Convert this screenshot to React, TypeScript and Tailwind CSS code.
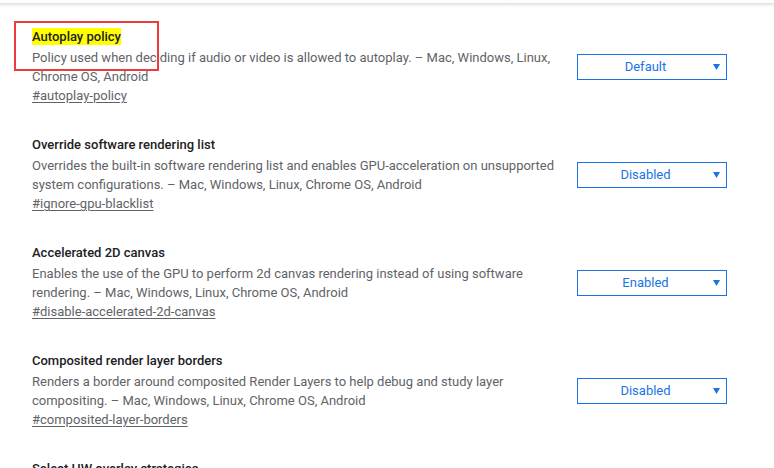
import React from "react";

const flags = [
  {
    name: "Autoplay policy",
    desc: "Policy used when deciding if audio or video is allowed to autoplay. – Mac, Windows, Linux, Chrome OS, Android",
    link: "#autoplay-policy",
    value: "Default",
    highlight: true,
  },
  {
    name: "Override software rendering list",
    desc: "Overrides the built-in software rendering list and enables GPU-acceleration on unsupported system configurations. – Mac, Windows, Linux, Chrome OS, Android",
    link: "#ignore-gpu-blacklist",
    value: "Disabled",
  },
  {
    name: "Accelerated 2D canvas",
    desc: "Enables the use of the GPU to perform 2d canvas rendering instead of using software rendering. – Mac, Windows, Linux, Chrome OS, Android",
    link: "#disable-accelerated-2d-canvas",
    value: "Enabled",
  },
  {
    name: "Composited render layer borders",
    desc: "Renders a border around composited Render Layers to help debug and study layer compositing. – Mac, Windows, Linux, Chrome OS, Android",
    link: "#composited-layer-borders",
    value: "Disabled",
  },
  {
    name: "Select HW overlay strategies",
    desc: "Select strategies used to promote quads to HW overlays. – Chrome OS",
    link: "#overlay-strategies",
    value: "Default",
  },
];

export default function App() {
  return (
    <div
      className="relative w-[774px] h-[468px] overflow-hidden bg-white"
      style={{ fontFamily: "Roboto, 'Liberation Sans', sans-serif" }}
    >
      <div className="mt-[3px] h-[4px] bg-gradient-to-b from-[#e0e0e0] to-white" />
      <div className="flex flex-col gap-[31px] pl-[32px] pt-[21px]">
        {flags.map((f) => (
          <div key={f.link} className="flex items-center">
            <div className="w-[530px] text-[13px]">
              <div className="leading-[18px] mb-[3px] font-medium text-[#202124]">
                {f.highlight ? (
                  <span className="inline-block bg-[#ffff00] leading-[17px]">{f.name}</span>
                ) : (
                  f.name
                )}
              </div>
              <p className="leading-[18.5px] text-[#5f6368]">{f.desc}</p>
              <a className="block mt-[1px] leading-[18px] text-[#5f6368] underline underline-offset-[2px]">
                {f.link}
              </a>
            </div>
            <div className="ml-[15px] flex h-[26px] w-[150px] items-center border border-[#1a73e8] bg-white text-[13px] text-[#1a73e8]">
              <span className="flex-1 text-center">{f.value}</span>
              <svg width="7" height="6" viewBox="0 0 7 6" className="mr-[6px]">
                <path d="M0 0 H7 L3.5 6 Z" fill="#1a73e8" />
              </svg>
            </div>
          </div>
        ))}
      </div>
      <div className="absolute left-[14px] top-[21px] h-[50px] w-[145px] border-2 border-[#ee3b3b]" />
    </div>
  );
}
